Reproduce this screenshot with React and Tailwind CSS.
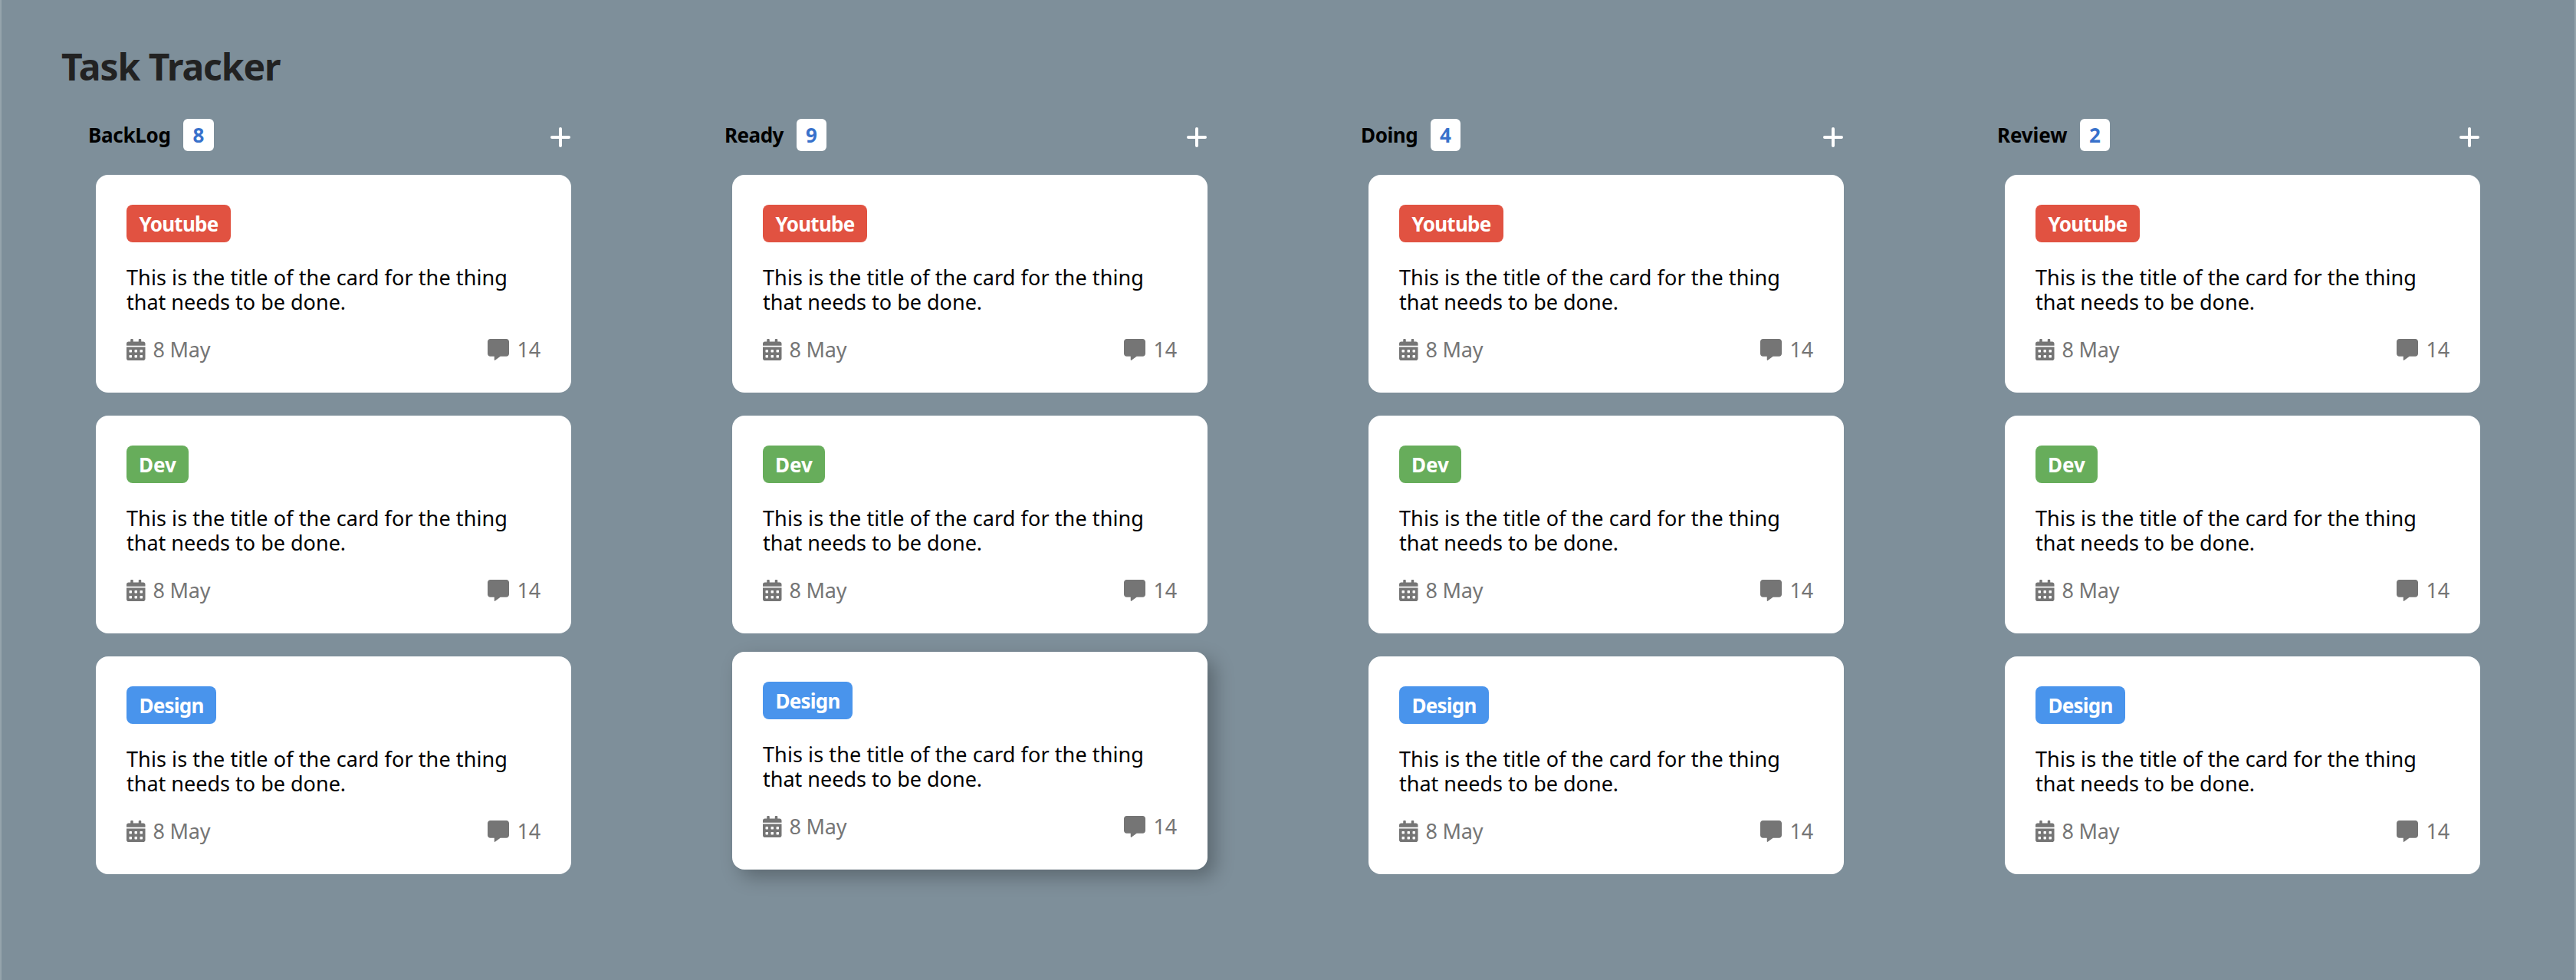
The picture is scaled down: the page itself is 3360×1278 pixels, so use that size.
import { FaCalendarAlt, FaCommentAlt } from "react-icons/fa";

const columns = [
  { name: "BackLog", count: 8, label: "w-[108px] tracking-[-0.3px]", badge: "w-10" },
  { name: "Ready", count: 9, label: "w-[78px] tracking-[-0.5px]", badge: "w-[39px]" },
  { name: "Doing", count: 4, label: "w-[75px] tracking-[-0.4px]", badge: "w-[39px]" },
  { name: "Review", count: 2, label: "w-[92px] tracking-[-0.1px]", badge: "w-[39px]" },
];

const tags = [
  { name: "Youtube", style: "w-[136px] bg-[#e15241] tracking-[-0.75px]" },
  { name: "Dev", style: "w-[81px] bg-[#67ad5b]" },
  { name: "Design", style: "w-[117px] bg-[#4994ec] tracking-[-0.75px]" },
];

function Card({ tag, raised }) {
  return (
    <article
      className={
        "h-[284px] w-[620px] rounded-2xl bg-white px-10 pt-[39px] " +
        (raised ? "-translate-y-1.5 shadow-[10px_10px_24px_rgba(0,0,0,0.27)]" : "")
      }
    >
      <div
        className={
          "flex h-[49px] items-center justify-center rounded-lg text-[26px] font-bold leading-none text-white " + tag.style
        }
      >
        <span>{tag.name}</span>
      </div>
      <p className="mt-[30px] whitespace-nowrap text-[27px] leading-8 text-black">
        <span className="tracking-[0.1px]">This is the title of the card for the thing</span>
        <br />
        that needs to be done.
      </p>
      <div className="mt-[30px] flex h-8 items-center justify-between text-[27px] leading-8 text-[#757575]">
        <div className="flex items-center gap-2.5">
          <FaCalendarAlt className="-mt-px h-7 w-[24.5px]" />
          <span className="tracking-[-0.2px]">8 May</span>
        </div>
        <div className="flex items-center gap-[11px]">
          <FaCommentAlt className="-mt-px size-7" />
          <span className="tracking-[-0.2px]">14</span>
        </div>
      </div>
    </article>
  );
}

function Column({ column, raisedIndex }) {
  return (
    <section className="w-[830px]">
      <header className="flex h-[42px] w-[629px] items-center">
        <h2 className={"whitespace-nowrap text-[26px] font-bold leading-none text-black " + column.label}>{column.name}</h2>
        <span
          className={
            "ml-4 flex h-[42px] items-center justify-center rounded-md bg-white text-[26px] font-bold leading-none text-[#3871cb] " +
            column.badge
          }
        >
          {column.count}
        </span>
        <button className="mt-1.5 ml-auto" aria-label="Add card">
          <svg className="size-[26px]" viewBox="0 0 26 26" fill="none" stroke="#fff" strokeWidth="4" strokeLinecap="round">
            <path d="M13 2v22M2 13h22" />
          </svg>
        </button>
      </header>
      <div className="mt-[31px] ml-2.5 flex flex-col gap-[30px]">
        {tags.map((tag, i) => (
          <Card key={tag.name} tag={tag} raised={i === raisedIndex} />
        ))}
      </div>
    </section>
  );
}

export default function App() {
  return (
    <main className="flex h-[1278px] w-[3360px] flex-col overflow-hidden border-x-2 border-[#95a4ac] bg-[#7e8f9a] font-['Noto_Sans',sans-serif]">
      <h1 className="mt-[57px] ml-[78px] h-[60px] whitespace-nowrap text-[48px] font-bold leading-[60px] tracking-[-1.05px] text-[#222]">
        Task Tracker
      </h1>
      <div className="mt-[38px] ml-[113px] flex w-[3320px]">
        {columns.map((column) => (
          <Column key={column.name} column={column} raisedIndex={column.name === "Ready" ? 2 : -1} />
        ))}
      </div>
    </main>
  );
}
